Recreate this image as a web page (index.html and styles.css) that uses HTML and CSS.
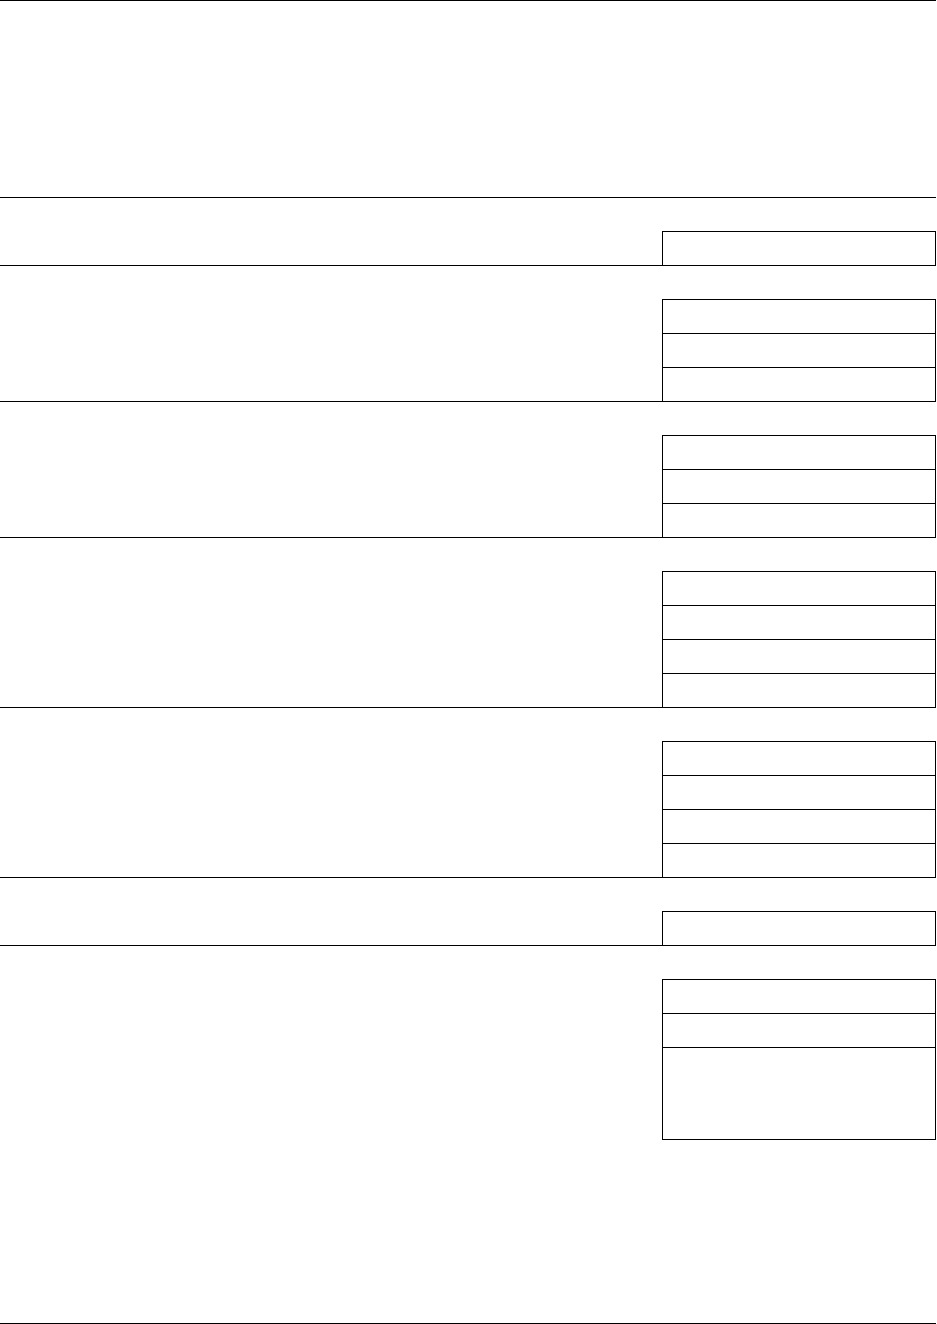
FILE: index.html
```html
<!DOCTYPE html>
<html lang="en">
<head>
<meta charset="utf-8">
<title>Form</title>
<link rel="stylesheet" href="styles.css">
</head>
<body>
<div class="page">
  <header class="header"></header>

  <section class="section">
    <div class="label"></div>
    <div class="boxes">
      <div class="row"></div>
    </div>
  </section>

  <section class="section">
    <div class="label"></div>
    <div class="boxes">
      <div class="row"></div>
      <div class="row"></div>
      <div class="row"></div>
    </div>
  </section>

  <section class="section">
    <div class="label"></div>
    <div class="boxes">
      <div class="row"></div>
      <div class="row"></div>
      <div class="row"></div>
    </div>
  </section>

  <section class="section">
    <div class="label"></div>
    <div class="boxes">
      <div class="row"></div>
      <div class="row"></div>
      <div class="row"></div>
      <div class="row"></div>
    </div>
  </section>

  <section class="section">
    <div class="label"></div>
    <div class="boxes">
      <div class="row"></div>
      <div class="row"></div>
      <div class="row"></div>
      <div class="row"></div>
    </div>
  </section>

  <section class="section">
    <div class="label"></div>
    <div class="boxes">
      <div class="row"></div>
    </div>
  </section>

  <section class="section section-last">
    <div class="label"></div>
    <div class="boxes boxes-closed">
      <div class="row"></div>
      <div class="row"></div>
      <div class="row row-tall"></div>
    </div>
  </section>

  <footer class="footer"></footer>
</div>
</body>
</html>
```

FILE: styles.css
```css
* {
  box-sizing: border-box;
}

html, body {
  margin: 0;
  padding: 0;
  background: #ffffff;
  font-family: "Liberation Sans", Arial, sans-serif;
  color: #000000;
}

.page {
  width: 936px;
  display: flex;
  flex-direction: column;
}

.header {
  height: 197px;
  border-top: 1px solid #000000;
}

.section {
  display: flex;
  justify-content: space-between;
  align-items: flex-start;
  border-top: 1px solid #000000;
  padding-top: 33px;
}

.label {
  flex: 1;
}

.boxes {
  width: 274px;
  border-left: 1px solid #000000;
  border-right: 1px solid #000000;
  display: flex;
  flex-direction: column;
}

.boxes-closed {
  border-bottom: 1px solid #000000;
}

.row {
  height: 34px;
  border-top: 1px solid #000000;
}

.row-tall {
  height: 92px;
}

.section-last {
  height: 378px;
}

.footer {
  height: 1px;
  border-top: 1px solid #000000;
}
```
